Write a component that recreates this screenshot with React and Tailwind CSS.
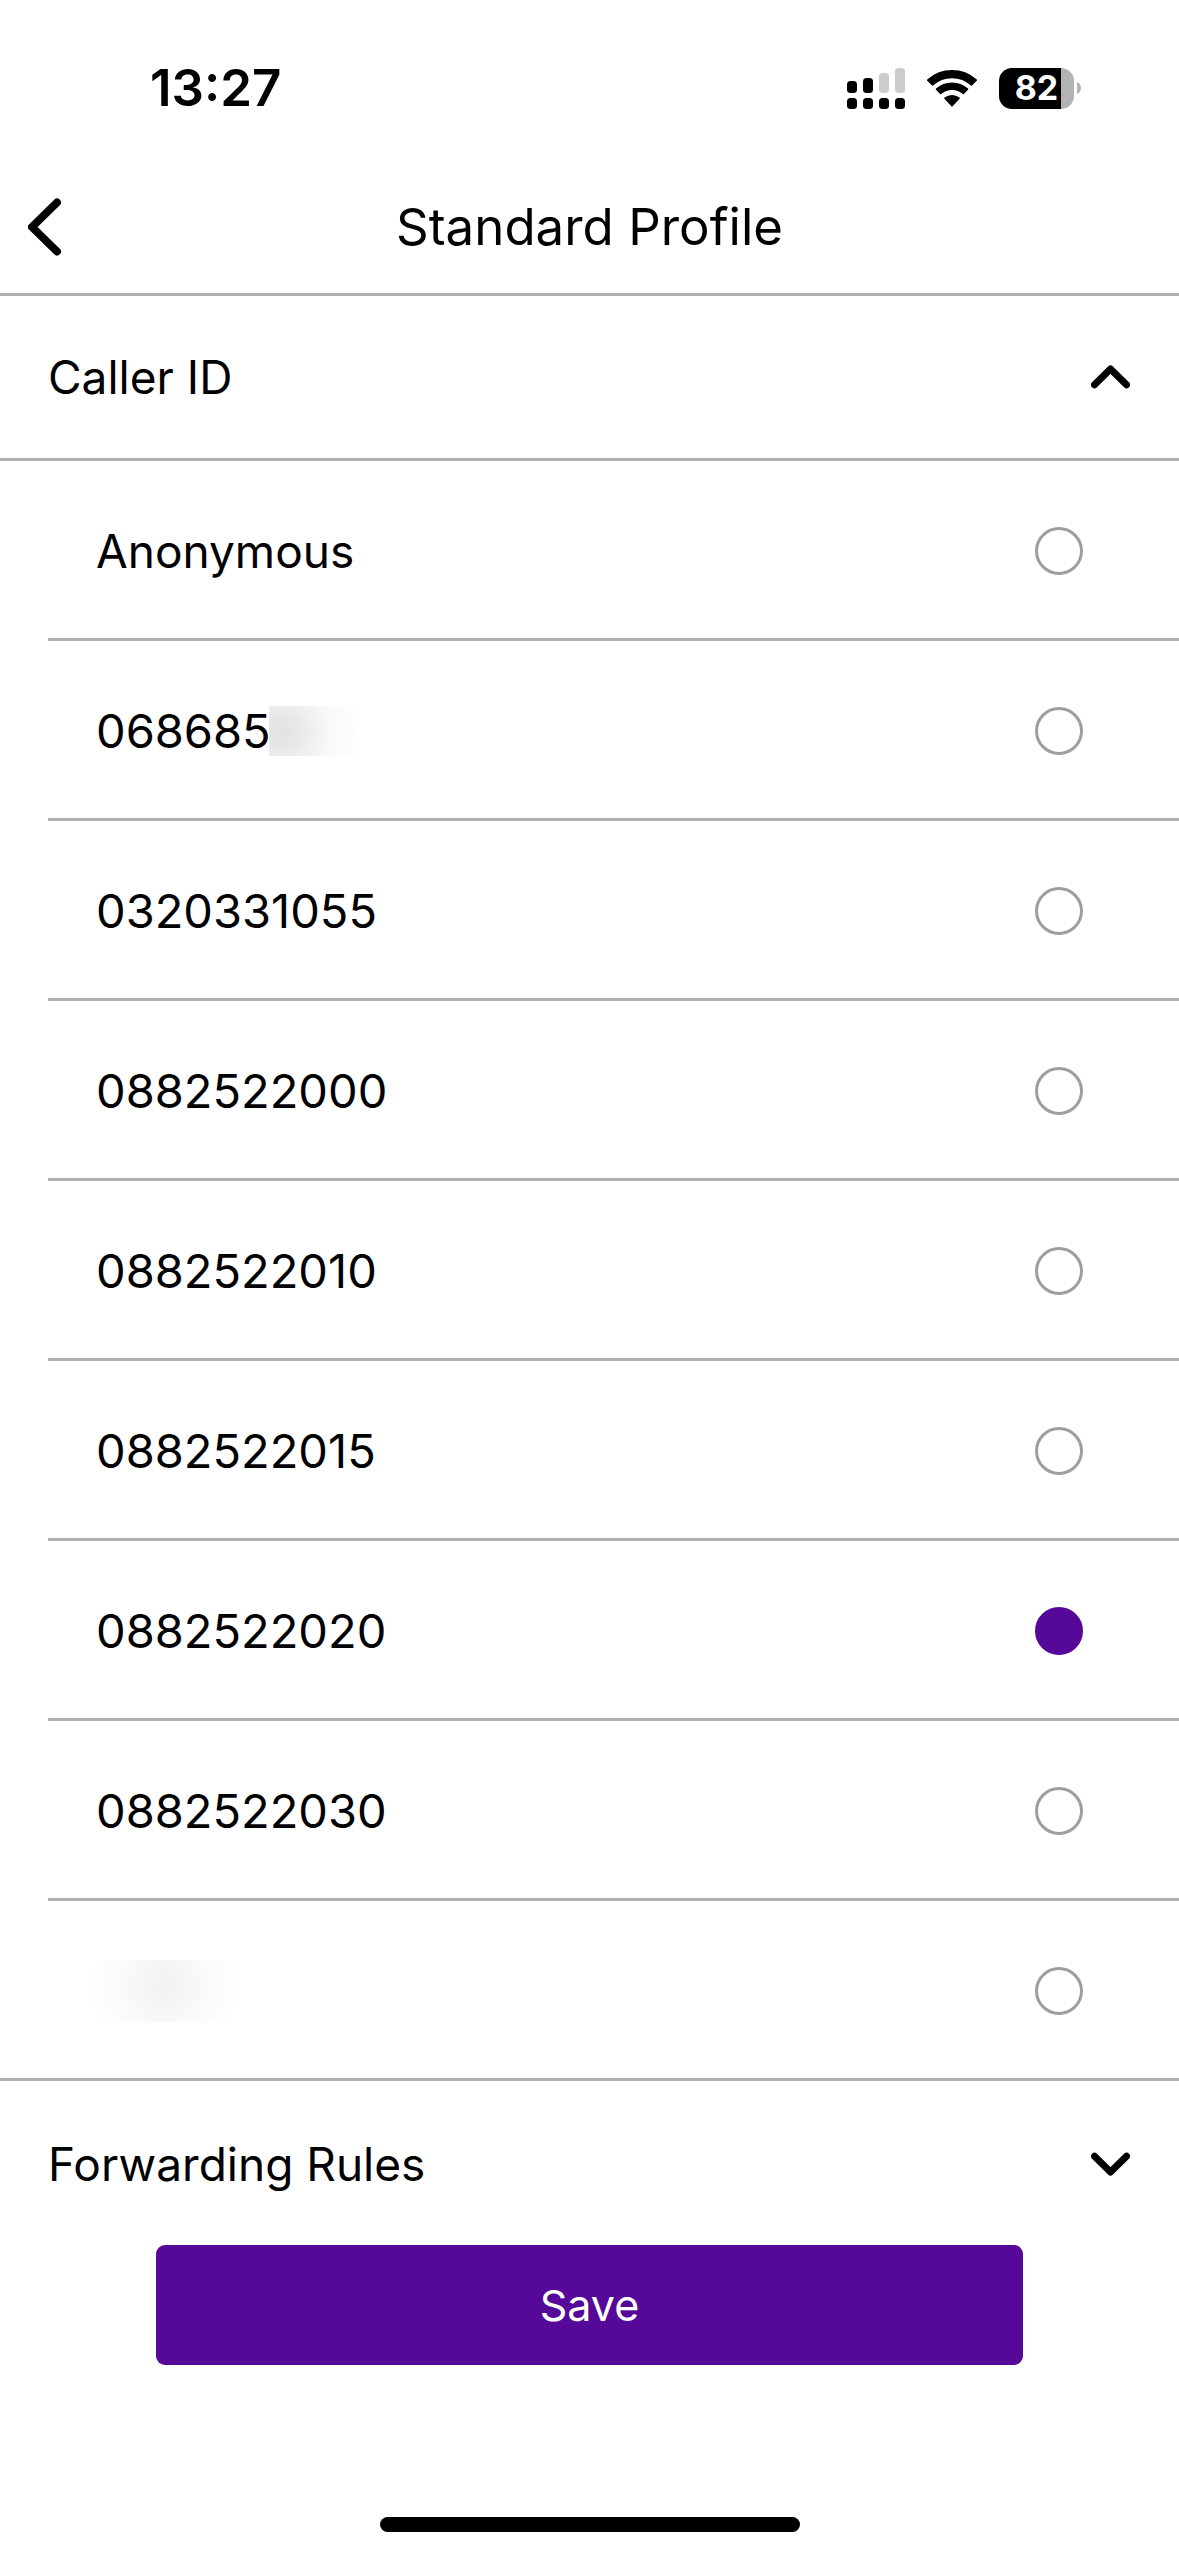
import { useState } from "react";

const CALLER_IDS = [
  { id: "anonymous", label: "Anonymous" },
  { id: "mobile", label: "068685", masked: "tail" },
  { id: "n1055", label: "0320331055" },
  { id: "n2000", label: "0882522000" },
  { id: "n2010", label: "0882522010" },
  { id: "n2015", label: "0882522015" },
  { id: "n2020", label: "0882522020" },
  { id: "n2030", label: "0882522030" },
  { id: "hidden", label: "", masked: "full" },
];

function SignalIcon() {
  return (
    <svg width="58" height="41" viewBox="0 0 58 41" aria-hidden="true">
      <rect x="0" y="13" width="10" height="12" rx="3.5" />
      <rect x="16" y="10" width="10" height="15" rx="3.5" />
      <rect x="32" y="5" width="10" height="20" rx="3.5" fill="#cccccc" />
      <rect x="48" y="0" width="10" height="25" rx="3.5" fill="#cccccc" />
      <rect x="0" y="30" width="10" height="11" rx="3.5" />
      <rect x="16" y="30" width="10" height="11" rx="3.5" />
      <rect x="32" y="30" width="10" height="11" rx="3.5" />
      <rect x="48" y="30" width="10" height="11" rx="3.5" />
    </svg>
  );
}

function WifiIcon() {
  return (
    <svg
      width="50"
      height="37"
      viewBox="0 0 50 37"
      stroke="#000"
      strokeWidth="1.6"
      strokeLinejoin="round"
      aria-hidden="true"
    >
      <path d="M0.8 10.1A36.2 36.2 0 0 1 49.2 10.1L44.4 14.9A28.9 28.9 0 0 0 5.6 14.9Z" />
      <path d="M9.5 19.2A23.2 23.2 0 0 1 40.5 19.2L36.3 23.4A17.4 17.4 0 0 0 13.7 23.4Z" />
      <path d="M18 28.2A11.4 11.4 0 0 1 32 28.2L25 35.8Z" />
    </svg>
  );
}

function Battery() {
  return (
    <div className="flex items-center gap-[3px]">
      <div className="flex h-[41px] w-[75px] items-center justify-center overflow-hidden rounded-[13px] bg-linear-to-r from-black from-83% to-[#b3b3b3] to-83% text-[34px] leading-none font-bold text-white">
        82
      </div>
      <svg width="4" height="12" viewBox="0 0 4 12" fill="#b3b3b3" aria-hidden="true">
        <path d="M0 0C2.4 1 4 3.3 4 6S2.4 11 0 12Z" />
      </svg>
    </div>
  );
}

function Chevron({ open }) {
  return (
    <svg
      width="39"
      height="24"
      viewBox="0 0 39 24"
      fill="none"
      stroke="#000"
      strokeWidth="7"
      strokeLinecap="round"
      strokeLinejoin="round"
      aria-hidden="true"
    >
      <path d={open ? "M3.5 19.8L19.5 4L35.5 19.8" : "M3.5 4.2L19.5 20L35.5 4.2"} />
    </svg>
  );
}

function SectionHeader({ title, open, onToggle }) {
  return (
    <h2>
      <button
        type="button"
        aria-expanded={open}
        onClick={onToggle}
        className="flex h-[162px] w-full items-center justify-between pr-[49px] pl-12 text-left"
      >
        {title}
        <Chevron open={open} />
      </button>
    </h2>
  );
}

function CallerRow({ item, checked, onSelect }) {
  const isNumber = /^\d/.test(item.label);
  return (
    <label className="ml-12 flex h-[180px] items-center justify-between border-b-3 border-[#b0b0b0] pt-[3px] pr-24 pl-12 last:ml-0 last:pl-24">
      <span className={isNumber ? "flex items-center text-[47px]" : "flex items-center"}>
        {item.label}
        {item.masked === "tail" && (
          <span className="-ml-0.5 h-[50px] w-[88px] bg-[radial-gradient(circle_at_12px_26px,#e2e2e2_0,#e8e8e8_18px,#f9f9f9_50px,#fff_82px)]" />
        )}
        {item.masked === "full" && (
          <span className="-ml-2 h-[62px] w-[150px] bg-[radial-gradient(circle_at_76px_26px,#f2f2f2_0,#f4f4f4_16px,#fafafa_42px,#fff_76px)]" />
        )}
      </span>
      <input
        type="radio"
        name="caller-id"
        aria-label={item.label || "Hidden number"}
        checked={checked}
        onChange={onSelect}
        className="size-12 appearance-none rounded-full border-3 border-[#9e9e9e] checked:border-[#560899] checked:bg-[#560899]"
      />
    </label>
  );
}

export default function App() {
  const [selected, setSelected] = useState("n2020");
  const [callerOpen, setCallerOpen] = useState(true);
  const [rulesOpen, setRulesOpen] = useState(false);

  return (
    <div className="flex min-h-screen flex-col bg-white font-['Inter',sans-serif] text-[46px] leading-[60px] text-black">
      <div className="flex h-44 items-center justify-between pr-[98px] pl-[150px]">
        <time className="text-[51px] font-semibold">13:27</time>
        <div className="flex items-center gap-[22px]">
          <SignalIcon />
          <WifiIcon />
          <Battery />
        </div>
      </div>

      <header className="grid h-[120px] grid-cols-[120px_1fr_120px] items-center border-b-3 border-[#b0b0b0] pb-4">
        <button type="button" aria-label="Back" className="pl-7">
          <svg
            width="34"
            height="58"
            viewBox="0 0 34 58"
            fill="none"
            stroke="#000"
            strokeWidth="8"
            strokeLinecap="round"
            strokeLinejoin="round"
            aria-hidden="true"
          >
            <path d="M29 4.5L4 29L29 53.5" />
          </svg>
        </button>
        <h1 className="text-center text-[51px]">Standard Profile</h1>
      </header>

      <main>
        <SectionHeader title="Caller ID" open={callerOpen} onToggle={() => setCallerOpen(!callerOpen)} />
        {callerOpen && (
          <div role="radiogroup" aria-label="Caller ID" className="border-t-3 border-[#b0b0b0] pb-0.5">
            {CALLER_IDS.map((item) => (
              <CallerRow
                key={item.id}
                item={item}
                checked={selected === item.id}
                onSelect={() => setSelected(item.id)}
              />
            ))}
          </div>
        )}
        <SectionHeader title="Forwarding Rules" open={rulesOpen} onToggle={() => setRulesOpen(!rulesOpen)} />
      </main>

      <div className="px-[156px]">
        <button type="button" className="h-[120px] w-full rounded-[9px] bg-[#560899] text-[43px] text-white">
          Save
        </button>
      </div>

      <div className="mx-auto mt-auto mb-6 h-[15px] w-[420px] rounded-full bg-black" />
    </div>
  );
}
